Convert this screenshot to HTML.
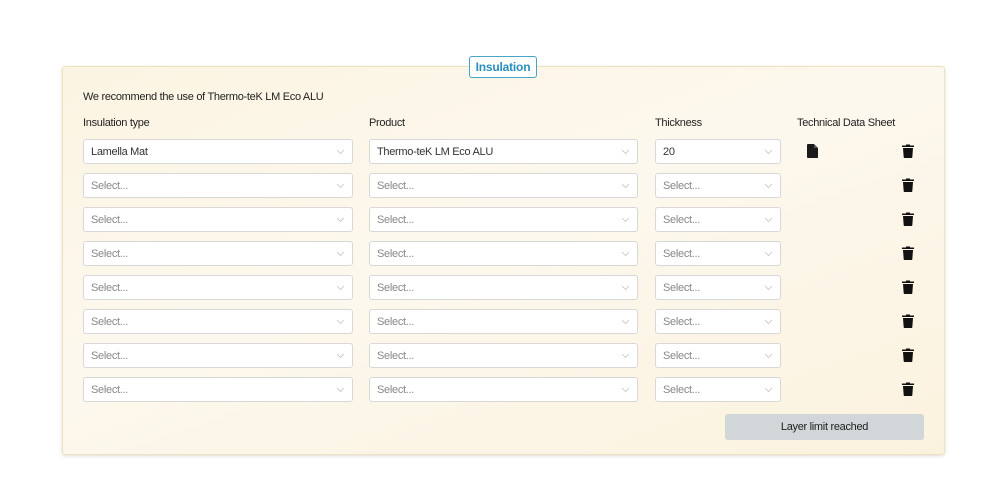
<!DOCTYPE html>
<html><head><meta charset="utf-8"><style>
*{box-sizing:border-box;margin:0;padding:0}
body{width:1000px;height:500px;background:#fff;font-family:"Liberation Sans Narrow","Liberation Sans",sans-serif;color:#222;position:relative;overflow:hidden}
.panel{position:absolute;left:62px;top:66px;width:883px;height:389px;border:1px solid #efe3bd;border-radius:3px;background:linear-gradient(160deg,#fcf4e2 0%,#fdf8ee 45%,#fbf2de 100%);box-shadow:0 1px 3px rgba(0,0,0,.15)}
.tag{position:absolute;left:469px;top:56px;width:68px;height:22px;border:1px solid #4aa3c8;border-radius:3px;background:#fff;color:#2a8fbf;font-weight:bold;font-size:12px;letter-spacing:-0.2px;text-align:center;line-height:20px}
.t{position:absolute;font-size:11px;white-space:nowrap;letter-spacing:-0.3px}
.sel{position:absolute;height:25px;background:#fff;border:1px solid #d8d8d8;border-radius:3px;font-size:11px;letter-spacing:-0.3px;line-height:24px;padding-left:7px;color:#333}
.sel.p{color:#888}
.sel svg{position:absolute;right:7px;top:9px}
.tr{position:absolute;left:902px}
.btn{position:absolute;left:725px;top:414px;width:199px;height:26px;background:#d1d6d8;border-radius:3px;font-size:11px;letter-spacing:-0.3px;text-align:center;line-height:26px;color:#222}
</style></head><body>
<div class="panel"></div>
<div class="tag">Insulation</div>
<div class="t" style="left:83px;top:91px">We recommend the use of Thermo-teK LM Eco ALU</div>
<div class="t" style="left:83px;top:117px">Insulation type</div>
<div class="t" style="left:369px;top:117px">Product</div>
<div class="t" style="left:655px;top:117px">Thickness</div>
<div class="t" style="left:797px;top:117px">Technical Data Sheet</div>
<svg style="position:absolute;left:807px;top:144px" width="11" height="14" viewBox="0 0 11 14"><path d="M1 0H7L11 4V13.2Q11 14 10 14H1Q0 14 0 13V1Q0 0 1 0Z" fill="#1a1a1a"/><path d="M7 0V4H11" fill="#555"/></svg>
<div id="rows"></div>
<div class="btn">Layer limit reached</div>
<script>
var chev='<svg width="9" height="6" viewBox="0 0 9 6"><path d="M1 1L4.5 4.5L8 1" stroke="#c4c4c4" fill="none" stroke-width="0.8"/></svg>';
var trash='<svg width="12" height="14" viewBox="0 0 12 14"><path d="M0 1.5H4V0.5H8V1.5H12V3H0Z" fill="#111"/><path d="M1 4H11L10.3 13.2Q10.2 14 9.4 14H2.6Q1.8 14 1.7 13.2Z" fill="#111"/></svg>';
var h='';
for(var i=0;i<8;i++){var y=139+34*i;var f=i==0;
h+='<div class="sel'+(f?'':' p')+'" style="left:83px;top:'+y+'px;width:270px">'+(f?'Lamella Mat':'Select...')+chev+'</div>';
h+='<div class="sel'+(f?'':' p')+'" style="left:369px;top:'+y+'px;width:269px">'+(f?'Thermo-teK LM Eco ALU':'Select...')+chev+'</div>';
h+='<div class="sel'+(f?'':' p')+'" style="left:655px;top:'+y+'px;width:126px">'+(f?'20':'Select...')+chev+'</div>';
h+='<div class="tr" style="top:'+(y+5)+'px">'+trash+'</div>';}
document.getElementById('rows').innerHTML=h;
</script>
</body></html>
